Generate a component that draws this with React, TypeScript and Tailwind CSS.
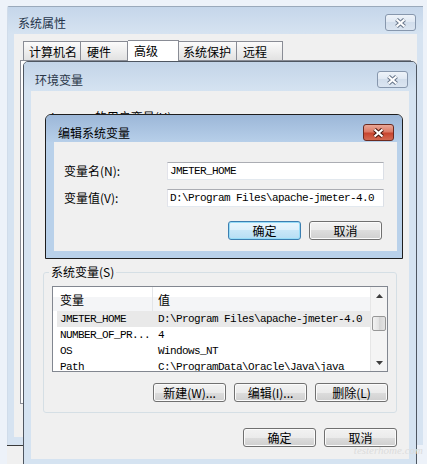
import React from 'react';

const CloseGlyph = ({ outline }: { outline: string }) => (
  <svg width="13" height="10" viewBox="0 0 13 10">
    <path d="M2.5 1.5 L10.5 8.5 M10.5 1.5 L2.5 8.5" stroke={outline} strokeWidth="4.2" />
    <path d="M2.5 1.5 L10.5 8.5 M10.5 1.5 L2.5 8.5" stroke="#ffffff" strokeWidth="2.2" />
  </svg>
);

const CloseButton = ({ active = false }: { active?: boolean }) => (
  <div
    className={
      active
        ? 'w-[31px] h-[17px] flex items-center justify-center rounded-[3px] border border-[#6b2a20] bg-[linear-gradient(to_bottom,#e9a797_0%,#dc7a66_45%,#c8452f_55%,#d36a52_100%)]'
        : 'w-[31px] h-[17px] flex items-center justify-center rounded-[3px] border border-[#8797ad] bg-[linear-gradient(to_bottom,#eef3f9_0%,#dfe8f3_50%,#d2deec_50%,#dbe5f1_100%)]'
    }
  >
    <CloseGlyph outline={active ? '#4a1810' : '#6c7a8e'} />
  </div>
);

const WinButton = ({ children, primary = false }: { children: React.ReactNode; primary?: boolean }) => (
  <button
    className={
      primary
        ? 'h-[19px] w-[73px] flex items-center justify-center rounded-[3px] border border-[#3c7fb1] shadow-[inset_0_0_0_1px_#97dcf7] bg-[linear-gradient(to_bottom,#eaf6fd_0%,#dcf0fb_50%,#c8e7f8_50%,#b6def4_100%)] text-[12px] leading-none text-black'
        : 'h-[19px] w-[73px] flex items-center justify-center rounded-[3px] border border-[#707070] shadow-[inset_0_0_0_1px_#fbfbfb] bg-[linear-gradient(to_bottom,#f2f2f2_0%,#ebebeb_50%,#dddddd_50%,#cfcfcf_100%)] text-[12px] leading-none text-black'
    }
  >
    {children}
  </button>
);

const TextBox = ({ value }: { value: string }) => (
  <div className="flex-1 h-[18px] flex items-center bg-white border border-[#abadb3] border-l-[#e2e3ea] border-r-[#dbdfe6] border-b-[#e3e9ef] pl-[2px] font-['Liberation_Mono',monospace] text-[11px] tracking-[-0.6px] whitespace-nowrap overflow-hidden">
    {value}
  </div>
);

const rows = [
  { name: 'JMETER_HOME', value: 'D:\\Program Files\\apache-jmeter-4.0', selected: true },
  { name: 'NUMBER_OF_PR...', value: '4', selected: false },
  { name: 'OS', value: 'Windows_NT', selected: false },
  { name: 'Path', value: 'C:\\ProgramData\\Oracle\\Java\\java', selected: false },
];

const App = () => {
  return (
    <div className="relative w-[427px] h-[464px] overflow-hidden bg-[#edf2f9] font-['Noto_Sans_CJK_SC',sans-serif] text-[12px] text-black">
      {/* 系统属性 */}
      <div className="absolute left-[7px] top-[6px] w-[416px] h-[439px] flex flex-col bg-[#d6e3f1] rounded-tl-[2px] border-l border-t border-l-[#d0dcea] border-t-[#9aa9bb]">
        <div className="h-[27px] flex items-start justify-between pl-[10px] pr-[7px] pt-[7px] bg-gradient-to-b from-[#c5d6ea] to-[#d6e3f1]">
          <span className="leading-[17px] text-[#25344a]">系统属性</span>
          <CloseButton />
        </div>
        <div className="flex-1 flex pl-[6px] pr-[6px] pb-[8px]">
          <div className="flex-1 bg-[#f0f0f0] flex flex-col px-[6px] pt-[6px]">
            <div className="h-[20px] flex items-end pl-[3px]">
              <div className="w-[58px] h-[19px] pl-[5px] leading-[19px] border-t border-l border-r border-[#898c95] bg-gradient-to-b from-[#fbfbfb] to-[#e2e2e2]">计算机名</div>
              <div className="w-[47px] h-[19px] pl-[6px] leading-[19px] border-t border-r border-[#898c95] bg-gradient-to-b from-[#fbfbfb] to-[#e2e2e2]">硬件</div>
              <div className="relative z-10 -mb-px w-[51px] h-[21px] pl-[6px] leading-[19px] border-t border-r border-[#898c95] bg-white">高级</div>
              <div className="w-[58px] h-[19px] pl-[4px] leading-[19px] border-t border-r border-[#898c95] bg-gradient-to-b from-[#fbfbfb] to-[#e2e2e2]">系统保护</div>
              <div className="w-[46px] h-[19px] pl-[6px] leading-[19px] border-t border-r border-[#898c95] bg-gradient-to-b from-[#fbfbfb] to-[#e2e2e2]">远程</div>
            </div>
            <div className="h-[344px] border border-[#898c95] bg-white" />
          </div>
        </div>
      </div>

      <div className="absolute left-[7px] top-[445px] w-[16px] h-[19px] border-t border-[#3a3a3a] bg-[#f0f0f0]" />

      {/* 环境变量 */}
      <div className="absolute left-[23px] top-[61px] w-[394px] h-[406px] flex flex-col overflow-hidden rounded-t-[5px] border border-[#4e5661] bg-[#d5e3f1]">
        <div className="h-[29px] flex items-start justify-between pl-[11px] pr-[8px] pt-[9px] bg-gradient-to-b from-[#c3d4e8] to-[#d5e3f1]">
          <span className="leading-[17px] text-[#2a3647]">环境变量</span>
          <CloseButton />
        </div>
        <div className="flex-1 flex px-[7px] pb-[7px]">
          <div className="flex-1 bg-[#f0f0f0] flex flex-col px-[12px]">
            <div className="mt-[19px] pl-[8px] leading-[14px] whitespace-nowrap">Lenovo 的用户变量(U)</div>

            <fieldset className="mt-[140px] border border-[#d5dfe5] rounded-[3px] px-[8px] pt-[6px] pb-[10px]">
              <legend className="-ml-[3px] px-[2px] leading-[16px]">系统变量(S)</legend>
              <div className="h-[86px] flex border border-[#828790] bg-white">
                <div className="flex-1 flex flex-col overflow-hidden">
                  <div className="h-[24px] shrink-0 flex bg-[linear-gradient(to_bottom,#ffffff_0%,#ffffff_42%,#f4f5f7_43%,#f4f5f7_100%)]">
                    <div className="w-[100px] pl-[7px] pt-[2px] flex items-center border-r border-[#e3e5e8]">变量</div>
                    <div className="pl-[5px] pt-[2px] flex items-center">值</div>
                  </div>
                  {rows.map((r) => (
                    <div
                      key={r.name}
                      className={
                        r.selected
                          ? 'h-[16px] shrink-0 flex items-center ml-[4px] bg-[#e9e9e9] whitespace-nowrap'
                          : 'h-[16px] shrink-0 flex items-center ml-[4px] whitespace-nowrap'
                      }
                    >
                      <span className="w-[96px] shrink-0 pl-[3px] font-['Liberation_Mono',monospace] text-[11px] tracking-[-0.6px]">{r.name}</span>
                      <span className="pl-[5px] font-['Liberation_Mono',monospace] text-[11px] tracking-[-0.6px]">{r.value}</span>
                    </div>
                  ))}
                </div>
                <div className="w-[17px] flex flex-col bg-[#f4f4f4] border-l border-[#e6e6e6]">
                  <div className="h-[17px] flex items-center justify-center">
                    <svg width="7" height="4" viewBox="0 0 7 4">
                      <polygon points="3.5,0 7,4 0,4" fill="#3d3d3d" />
                    </svg>
                  </div>
                  <div className="mt-[12px] mx-[1px] h-[15px] rounded-[2px] border border-[#979797] bg-[linear-gradient(to_right,#f3f3f3,#e2e2e2_50%,#d5d5d5_51%,#e3e3e3)]" />
                  <div className="flex-1" />
                  <div className="h-[17px] flex items-center justify-center">
                    <svg width="7" height="4" viewBox="0 0 7 4">
                      <polygon points="0,0 7,0 3.5,4" fill="#3d3d3d" />
                    </svg>
                  </div>
                </div>
              </div>
              <div className="mt-[11px] flex justify-end gap-[8px]">
                <WinButton>新建(W)...</WinButton>
                <WinButton>编辑(I)...</WinButton>
                <WinButton>删除(L)</WinButton>
              </div>
            </fieldset>

            <div className="mt-[15px] flex justify-end gap-[8px]">
              <WinButton>确定</WinButton>
              <WinButton>取消</WinButton>
            </div>
          </div>
        </div>
      </div>

      {/* 编辑系统变量 */}
      <div className="absolute left-[45px] top-[114px] w-[358px] h-[145px] flex flex-col overflow-hidden rounded-t-[6px] border border-[#1e1e1e] bg-[#b9d1ea]">
        <div className="h-[27px] flex items-start justify-between pl-[12px] pr-[8px] pt-[9px] bg-gradient-to-b from-[#9cb7d8] to-[#b7cfe9]">
          <span className="leading-[17px] text-black">编辑系统变量</span>
          <CloseButton active />
        </div>
        <div className="flex-1 flex pl-[8px] pr-[5px] pb-[7px]">
          <div className="flex-1 bg-[#f0f0f0] flex flex-col pl-[10px] pr-[13px] pt-[20px]">
            <div className="h-[18px] flex items-center">
              <span className="w-[103px] shrink-0">变量名(N):</span>
              <TextBox value="JMETER_HOME" />
            </div>
            <div className="mt-[9px] h-[18px] flex items-center">
              <span className="w-[103px] shrink-0">变量值(V):</span>
              <TextBox value="D:\Program Files\apache-jmeter-4.0" />
            </div>
            <div className="mt-[14px] pr-[2px] flex justify-end gap-[8px]">
              <WinButton primary>确定</WinButton>
              <WinButton>取消</WinButton>
            </div>
          </div>
        </div>
      </div>

      <span className="absolute right-[4px] bottom-[6px] font-['Liberation_Serif',serif] italic text-[11px] text-[#dcdcdc]">testerhome.com</span>
    </div>
  );
};

export default App;
